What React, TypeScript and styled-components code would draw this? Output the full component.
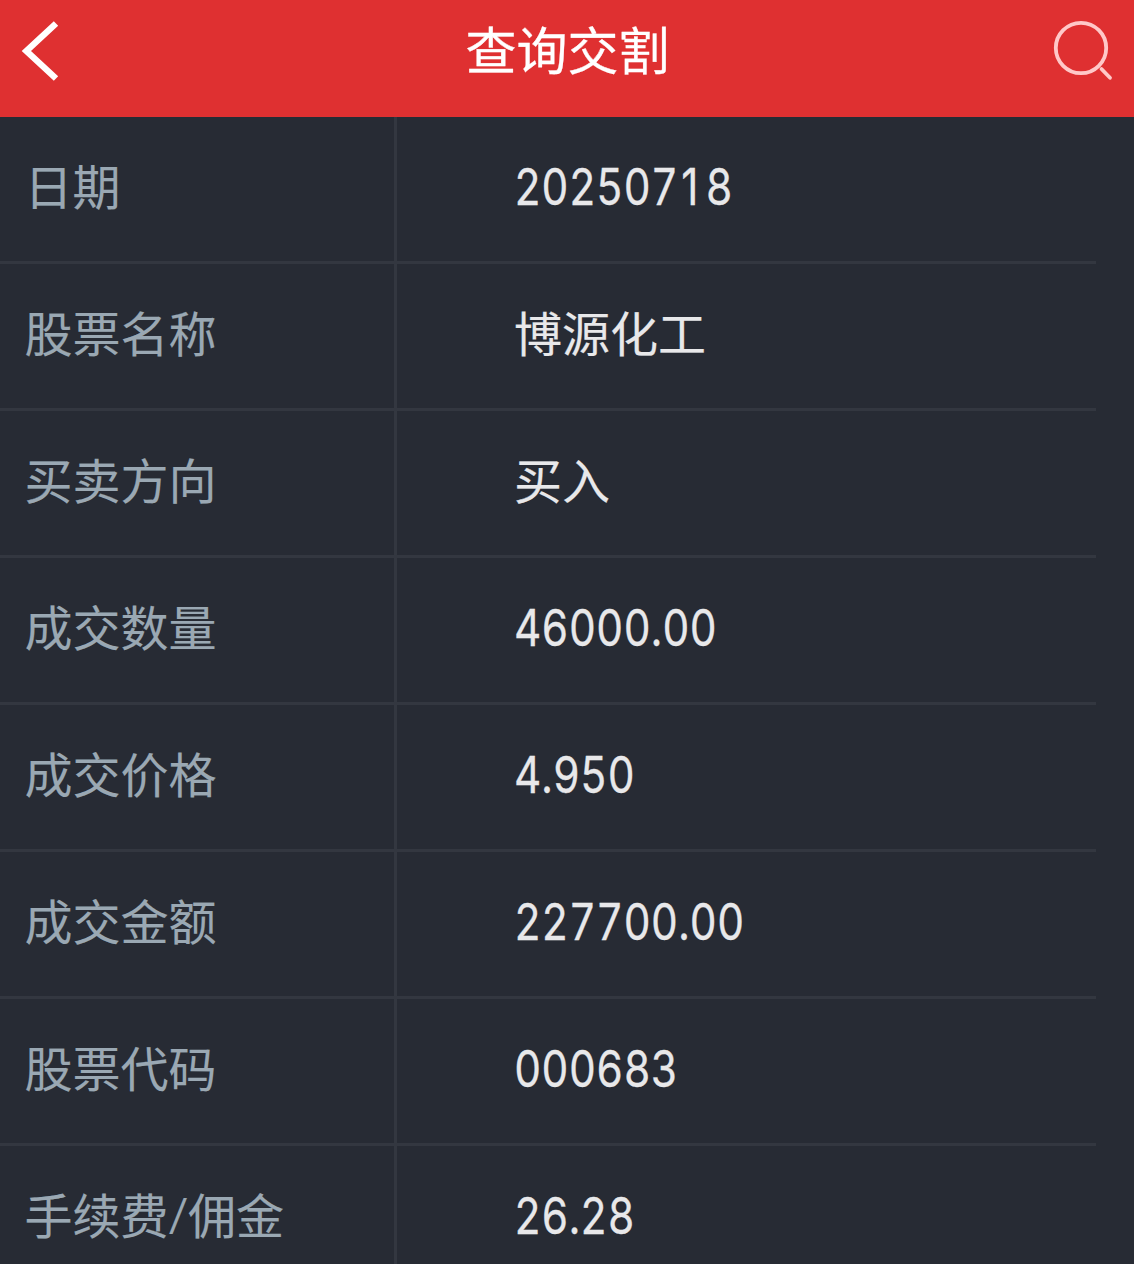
import React from 'react';
import styled, { createGlobalStyle } from 'styled-components';

const GlobalStyle = createGlobalStyle`
  *, *::before, *::after { box-sizing: border-box; }
  body { margin: 0; background: #272b34; }
`;

const Screen = styled.main`
  width: 1134px;
  height: 1264px;
  overflow: hidden;
  background: #272b34;
  font-family: 'Noto Sans CJK SC', sans-serif;
`;

const Header = styled.header`
  display: grid;
  grid-template-columns: 120px 1fr 120px;
  height: 117px;
  align-items: start;
  background: #df3031;
`;

const Title = styled.h1`
  margin: 0;
  padding-left: 1px;
  text-align: center;
  font-size: 51px;
  font-weight: 400;
  line-height: 97px;
  color: #fff;
  -webkit-text-stroke: 0.3px currentColor;
`;

const IconButton = styled.button<{ $end?: boolean }>`
  display: flex;
  justify-content: ${(p) => (p.$end ? 'flex-end' : 'flex-start')};
  height: 100px;
  padding: 0;
  border: 0;
  background: none;
`;

const Row = styled.div`
  display: grid;
  grid-template-columns: 397px 699px;
  height: 147px;
`;

const Cell = styled.div`
  border-bottom: 3px solid #333740;
  font-size: 48px;
  line-height: 135px;
  white-space: nowrap;
  -webkit-text-stroke: 0.15px currentColor;
`;

const Label = styled(Cell)`
  padding-left: 24.5px;
  border-right: 3px solid #333740;
  color: #9aa8b3;
`;

const Value = styled(Cell)`
  padding-left: 117px;
  color: #e8e8ea;
`;

const Slash = styled.span`
  display: inline-block;
  width: 19.5px;
  text-align: center;
  transform: translateY(-2px) scaleY(0.77);
`;

const Digits = styled.span`
  display: inline-block;
  margin-left: -0.5px;
  font-family: Inter, sans-serif;
  font-size: 50px;
  line-height: 1;
  font-variant-numeric: tabular-nums;
  transform: scaleX(0.844);
  transform-origin: left;
  -webkit-text-stroke: 0.3px currentColor;
`;

const PlainOne = styled.span`
  display: inline-block;
  width: 32.4px;
  padding-right: 5px;
  text-align: center;
  font-variant-numeric: normal;
`;

const records = [
  { label: '日期', value: '20250718' },
  { label: '股票名称', value: '博源化工' },
  { label: '买卖方向', value: '买入' },
  { label: '成交数量', value: '46000.00' },
  { label: '成交价格', value: '4.950' },
  { label: '成交金额', value: '227700.00' },
  { label: '股票代码', value: '000683' },
  { label: '手续费/佣金', value: '26.28' },
];

const isNumeric = (value: string) => /^[\d.]+$/.test(value);

// Swaps every occurrence of `mark` for its own styled glyph.
const withGlyph = (text: string, mark: string, Glyph: React.ElementType) =>
  text.split(mark).map((part, i) => (
    <React.Fragment key={i}>
      {i > 0 && <Glyph>{mark}</Glyph>}
      {part}
    </React.Fragment>
  ));

export default function App() {
  return (
    <Screen>
      <GlobalStyle />
      <Header>
        <IconButton aria-label="返回">
          <svg width="80" height="100" fill="none" stroke="#fff" strokeWidth="6.4">
            <path d="M56 23.5 26.4 51 56 78.5" />
          </svg>
        </IconButton>
        <Title>查询交割</Title>
        <IconButton $end aria-label="搜索">
          <svg width="100" height="100" fill="none" stroke="#ffc8c8" strokeWidth="3.8">
            <circle cx="47" cy="48" r="25.2" />
            <path d="M67.5 69 76 77.8" strokeLinecap="round" />
          </svg>
        </IconButton>
      </Header>
      {records.map(({ label, value }) => (
        <Row key={label}>
          <Label>{withGlyph(label, '/', Slash)}</Label>
          <Value>
            {isNumeric(value) ? <Digits>{withGlyph(value, '1', PlainOne)}</Digits> : value}
          </Value>
        </Row>
      ))}
    </Screen>
  );
}
